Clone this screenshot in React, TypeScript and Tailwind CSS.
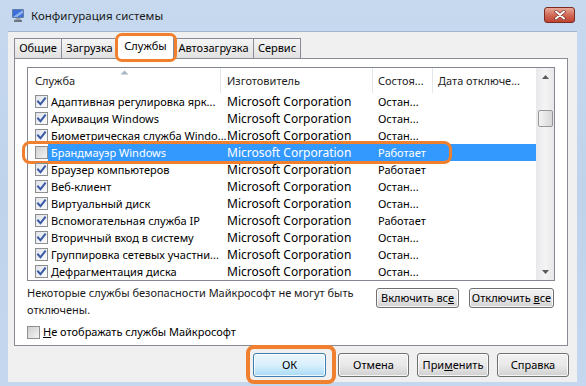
import React from 'react'

type Row = { name: string; state: string; checked: boolean; selected?: boolean }

const rows: Row[] = [
  { name: 'Адаптивная регулировка ярк...', state: 'Остан...', checked: true },
  { name: 'Архивация Windows', state: 'Остан...', checked: true },
  { name: 'Биометрическая служба Windo...', state: 'Остан...', checked: true },
  { name: 'Брандмауэр Windows', state: 'Работает', checked: false, selected: true },
  { name: 'Браузер компьютеров', state: 'Работает', checked: true },
  { name: 'Веб-клиент', state: 'Остан...', checked: true },
  { name: 'Виртуальный диск', state: 'Остан...', checked: true },
  { name: 'Вспомогательная служба IP', state: 'Работает', checked: true },
  { name: 'Вторичный вход в систему', state: 'Остан...', checked: true },
  { name: 'Группировка сетевых участни...', state: 'Остан...', checked: true },
  { name: 'Дефрагментация диска', state: 'Остан...', checked: true },
]

const tabs = ['Общие', 'Загрузка', 'Службы', 'Автозагрузка', 'Сервис']
const tabWidths = ['w-[48px]', 'w-[56px]', 'w-[57px]', 'w-[80px]', 'w-[47px]']

const CheckBox = ({ checked, dim }: { checked: boolean; dim?: boolean }) => (
  <div
    className={`w-[13px] h-[13px] border border-[#8e8f8f] flex items-center justify-center ${
      dim ? 'bg-gradient-to-br from-[#cfcfcf] to-[#f4f4f4]' : 'bg-gradient-to-br from-[#dfe3ea] to-[#fbfbfb]'
    }`}
  >
    {checked && (
      <svg width="11" height="11" viewBox="0 0 11 11">
        <path d="M2 5.5 L4.5 8.2 L9 2.5" fill="none" stroke="#3b5aa5" strokeWidth="2" strokeLinecap="square" />
      </svg>
    )}
  </div>
)

const Button = ({ children, width, isDefault }: { children: React.ReactNode; width: string; isDefault?: boolean }) => (
  <div
    className={`${width} h-full rounded-[3px] border flex items-center justify-center shadow-[inset_0_0_0_1px_rgba(255,255,255,0.8)] ${
      isDefault
        ? 'border-[#3c7fb1] bg-gradient-to-b from-[#eaf6fd] via-[#d9f0fc] to-[#a7d9f5]'
        : 'border-[#707070] bg-gradient-to-b from-[#f2f2f2] via-[#e9e9e9] to-[#d0d0d0]'
    }`}
  >
    <span className="whitespace-pre">{children}</span>
  </div>
)

const AppIcon = () => (
  <svg width="15" height="15" viewBox="0 0 15 15">
    <rect x="1" y="1" width="12" height="9" rx="1" fill="#5f7fa8" />
    <rect x="2" y="2" width="10" height="7" fill="#3f6fd8" />
    <path d="M2 9 L12 2 L12 5 L6 9 Z" fill="#8fb4f0" />
    <path d="M5 10 L9 10 L10 12 L4 12 Z" fill="#9aa3ae" />
    <rect x="3" y="12" width="8" height="2" fill="#6d7683" />
  </svg>
)

export default function App() {
  return (
    <div className="w-[586px] h-[386px] flex flex-col bg-gradient-to-b from-[#c6d9ef] via-[#bfd3eb] to-[#c4d7ee] font-['Noto_Sans'] text-[11px] text-black overflow-hidden">
      {/* title bar */}
      <div className="h-[31px] flex items-center pl-[11px] pr-[11px]">
        <AppIcon />
        <span className="ml-[5px] text-[11.5px] text-[#1a1a1a]">Конфигурация системы</span>
        <div className="ml-auto mb-[2px] w-[31px] h-[16px] rounded-[3px] border border-[#7a2c22] bg-gradient-to-b from-[#e9a999] via-[#d16a58] to-[#c0412f] flex items-center justify-center">
          <svg width="12" height="10" viewBox="0 0 12 10">
            <path d="M2 1.5 L10 8.5 M10 1.5 L2 8.5" stroke="#6b2a22" strokeWidth="3.2" strokeLinecap="round" />
            <path d="M2 1.5 L10 8.5 M10 1.5 L2 8.5" stroke="#ffffff" strokeWidth="2" strokeLinecap="round" />
          </svg>
        </div>
      </div>

      {/* client area */}
      <div className="ml-[8px] w-[569px] h-[351px] bg-[#f0f0f0] border-t border-[#9fb4cf] flex flex-col">
        {/* tabs */}
        <div className="h-[26px] ml-[6px] flex items-end">
          {tabs.map((t, i) => {
            const selected = i === 2
            return (
              <div
                key={t}
                className={`relative ${tabWidths[i]} flex items-center justify-center border-t border-r border-[#898c95] ${
                  i === 0 || selected ? 'border-l' : ''
                } ${selected ? 'h-[24px] bg-white -mb-px z-10 -ml-px pb-[2px]' : 'h-[20px] bg-gradient-to-b from-[#f5f5f5] to-[#e1e1e1]'} ${
                  i === 3 ? 'border-l-0' : ''
                }`}
              >
                {t}
                {selected && (
                  <div className="absolute -top-[3px] -left-[3px] -right-[4px] -bottom-[3px] border-[3px] border-[#f0802e] rounded-[7px]" />
                )}
              </div>
            )
          })}
        </div>

        {/* tab panel */}
        <div className="ml-[6px] w-[554px] h-[288px] bg-white border border-[#898c95] pl-[12px] pt-[8px] flex flex-col">
          {/* list */}
          <div className="w-[528px] h-[214px] border border-[#828790] flex">
            <div className="w-[508px] flex flex-col">
              <div className="h-[25px] flex text-[#1e1e1e]">
                <div className="relative w-[193px] border-r border-[#e3e6ea] pl-[7px] pt-[5px]">
                  Служба
                  <svg className="absolute left-[92px] top-[2px]" width="9" height="5" viewBox="0 0 9 5">
                    <path d="M0.5 4.5 L4.5 0.5 L8.5 4.5 Z" fill="#a7b4c4" />
                  </svg>
                </div>
                <div className="w-[152px] border-r border-[#e3e6ea] pl-[6px] pt-[5px]">Изготовитель</div>
                <div className="w-[60px] border-r border-[#e3e6ea] pl-[5px] pt-[5px]">Состоя...</div>
                <div className="flex-1 pl-[5px] pt-[5px] whitespace-nowrap">Дата отключе...</div>
              </div>
              {rows.map(r => (
                <div key={r.name} className="relative h-[17px] flex items-center leading-[17px]">
                  <div className="w-[20px] pl-[7px]">
                    <CheckBox checked={r.checked} dim={!r.checked} />
                  </div>
                  <div className={`flex-1 h-full flex items-center ${r.selected ? 'bg-[#3399ff] text-white' : ''}`}>
                    <div className="w-[173px] pl-[3px] whitespace-nowrap">{r.name}</div>
                    <div className="w-[152px] pl-[6px] whitespace-nowrap text-[12px]">Microsoft Corporation</div>
                    <div className="w-[60px] pl-[5px] whitespace-nowrap">{r.state}</div>
                  </div>
                  {r.selected && (
                    <div className="absolute -left-[6px] w-[430px] -top-[3px] -bottom-[3px] border-[3px] border-[#f0802e] rounded-[8px]" />
                  )}
                </div>
              ))}
            </div>
            {/* scrollbar */}
            <div className="flex-1 bg-gradient-to-r from-[#e8e8ea] via-[#f4f4f5] to-[#e8e8ea] flex flex-col items-center">
              <div className="h-[17px] flex items-center justify-center">
                <svg width="7" height="4" viewBox="0 0 7 4">
                  <path d="M0 4 L3.5 0 L7 4 Z" fill="#5a5a5a" />
                </svg>
              </div>
              <div className="mt-[25px] w-[15px] h-[17px] rounded-[2px] border border-[#979797] bg-gradient-to-r from-[#f3f3f3] to-[#d8d8d8]" />
              <div className="mt-auto h-[17px] flex items-center justify-center">
                <svg width="7" height="4" viewBox="0 0 7 4">
                  <path d="M0 0 L3.5 4 L7 0 Z" fill="#5a5a5a" />
                </svg>
              </div>
            </div>
          </div>

          {/* info + enable/disable */}
          <div className="w-[528px] flex mt-[3px]">
            <div className="flex-1 leading-[17px] text-[#1a1a1a] whitespace-nowrap">
              Некоторые службы безопасности Майкрософт не могут быть
              <br />
              отключены.
            </div>
            <div className="h-[20px] mt-[4px] flex gap-[10px] mr-[1px]">
              <Button width="w-[83px]">
                Включить вс<span className="underline">е</span>
              </Button>
              <Button width="w-[85px]">
                Отключить <span className="underline">в</span>се
              </Button>
            </div>
          </div>

          <div className="mt-[6px] flex items-center gap-[3px]">
            <CheckBox checked={false} dim />
            <span>
              <span className="underline">Н</span>е отображать службы Майкрософт
            </span>
          </div>
        </div>

        {/* dialog buttons */}
        <div className="mt-[7px] h-[24px] flex justify-end pr-[8px]">
          <div className="relative h-full">
            <Button width="w-[73px]" isDefault>
              ОК
            </Button>
            <div className="absolute -left-[7px] -right-[10px] -top-[8px] -bottom-[7px] border-[4px] border-[#f0802e] rounded-[8px]" />
          </div>
          <div className="ml-[12px] h-full">
            <Button width="w-[71px]">Отмена</Button>
          </div>
          <div className="ml-[8px] h-full">
            <Button width="w-[72px]">
              При<span className="underline">м</span>енить
            </Button>
          </div>
          <div className="ml-[8px] h-full">
            <Button width="w-[72px]">Справка</Button>
          </div>
        </div>
      </div>
    </div>
  )
}
